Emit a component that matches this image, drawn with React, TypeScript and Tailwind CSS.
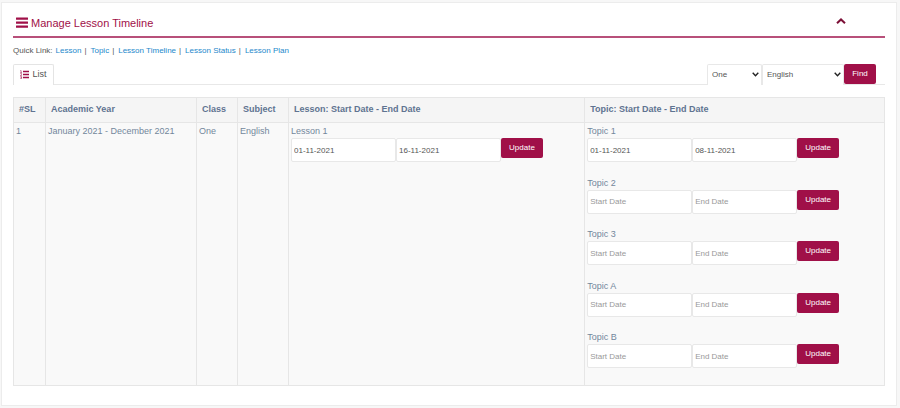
import { ReactNode } from "react";

type Entry = { name: string; start?: string; end?: string };

const quickLinks = ["Lesson", "Topic", "Lesson Timeline", "Lesson Status", "Lesson Plan"];

const lessons: Entry[] = [{ name: "Lesson 1", start: "01-11-2021", end: "16-11-2021" }];

const topics: Entry[] = [
  { name: "Topic 1", start: "01-11-2021", end: "08-11-2021" },
  { name: "Topic 2" },
  { name: "Topic 3" },
  { name: "Topic A" },
  { name: "Topic B" },
];

function BarsIcon() {
  return (
    <svg className="h-[12px] w-[12px]" viewBox="0 0 12 12" fill="currentColor" aria-hidden="true">
      <rect y="0.4" width="12" height="2.4" rx="0.4" />
      <rect y="4.4" width="12" height="2.4" rx="0.4" />
      <rect y="8.4" width="12" height="2.4" rx="0.4" />
    </svg>
  );
}

function ListIcon() {
  return (
    <svg className="h-[9px] w-[9px]" viewBox="0 0 9 9" fill="none" stroke="currentColor" aria-hidden="true">
      <path d="M3 1.5h6M3 4.5h6M3 7.5h6" strokeWidth="1.3" />
      <path d="M0.3 0.6h0.8v2M0.3 2.6h1.6M0.3 3.6h1.2v0.8L0.4 5.5h1.4M0.3 6.6h1.3v2H0.3M0.6 7.6h1" strokeWidth="0.6" />
    </svg>
  );
}

function SelectBox({ label, value, className }: { label: string; value: string; className: string }) {
  return (
    <div className={`relative ${className}`}>
      <select
        aria-label={label}
        defaultValue={value}
        className="h-[21px] w-full appearance-none rounded-t-xs border border-b-0 border-[#e8e8e8] bg-white pl-1 pr-3 text-[8px] text-[#555]"
      >
        <option>{value}</option>
      </select>
      <svg
        className="pointer-events-none absolute right-[3px] top-2 h-[5px] w-[7px]"
        viewBox="0 0 7 5"
        fill="none"
        stroke="#222"
        strokeWidth="1.4"
        aria-hidden="true"
      >
        <path d="M0.7 0.8L3.5 3.7L6.3 0.8" />
      </svg>
    </div>
  );
}

function ActionButton({ children, className }: { children: ReactNode; className: string }) {
  return (
    <button
      type="button"
      className={`shrink-0 rounded-xs bg-[#a01048] text-center text-[8px] leading-[20px] text-white ${className}`}
    >
      {children}
    </button>
  );
}

function DateInput({ label, hint, value }: { label: string; hint: string; value?: string }) {
  return (
    <input
      type="text"
      aria-label={label}
      placeholder={hint}
      defaultValue={value}
      className="h-[24px] w-[105px] min-w-0 rounded-xs border border-[#e8e8e8] bg-white px-[2px] text-[8px] text-[#555] placeholder:text-[#999]"
    />
  );
}

function EntryRow({ entry }: { entry: Entry }) {
  return (
    <li>
      <div className="mb-px leading-[12px]">{entry.name}</div>
      <div className="flex items-start">
        <DateInput label={`${entry.name} start date`} hint="Start Date" value={entry.start} />
        <DateInput label={`${entry.name} end date`} hint="End Date" value={entry.end} />
        <ActionButton className="w-[42px]">Update</ActionButton>
      </div>
    </li>
  );
}

const th = "border border-[#e6e6e6] px-[5px] text-left font-bold text-[#5f7391]";
const td = "border border-[#e6e6e6] px-[2px] pt-[2px] align-top";

export default function App() {
  return (
    <div className="min-h-screen bg-[#f7f7f7] pb-[2px] pl-px pr-[3px] pt-[2px] font-['Liberation_Sans',Arial,sans-serif] text-[9px] text-[#73879c]">
      <main className="border border-[#ececec] bg-white px-[11px] pb-[19px]">
        <header className="flex h-[35px] items-center justify-between border-b-2 border-[#b8507a] pl-[3px] pr-[39px] pt-[6px] text-[#a01048]">
          <h1 className="flex items-center gap-[3px] text-[11px] leading-[14px]">
            <BarsIcon />
            Manage Lesson Timeline
          </h1>
          <button type="button" aria-label="Collapse panel" className="-mt-1">
            <svg className="h-[6px] w-[10px]" viewBox="0 0 10 6" fill="none" stroke="#7c1037" strokeWidth="2" aria-hidden="true">
              <path d="M1 5.2L5 1.4L9 5.2" />
            </svg>
          </button>
        </header>

        <nav aria-label="Quick links" className="mt-[7px] flex h-[12px] items-center gap-[3px] text-[8px] leading-[12px] text-[#555]">
          <span>Quick Link:</span>
          {quickLinks.map((link, i) => (
            <span key={link} className="flex gap-[4px]">
              {i > 0 && <span>|</span>}
              <a href="#" className="text-[#2488cb]">
                {link}
              </a>
            </span>
          ))}
        </nav>

        <div className="mt-[7px] flex h-[21px] border-b border-[#e8e8e8]">
          <button
            type="button"
            className="flex h-[21px] w-[41px] items-center justify-center gap-[3px] rounded-t-xs border border-b-0 border-[#e4e4e4] bg-white pb-px text-[#555]"
          >
            <span className="text-[#a01048]">
              <ListIcon />
            </span>
            List
          </button>
          <form className="ml-auto mr-[9px] flex">
            <SelectBox label="Class" value="One" className="w-[55px]" />
            <SelectBox label="Subject" value="English" className="w-[82px]" />
            <ActionButton className="h-[20px] w-[32px]">Find</ActionButton>
          </form>
        </div>

        <table className="mt-[12px] w-full table-fixed border-collapse bg-[#f9f9f9]">
          <colgroup>
            <col className="w-[32px]" />
            <col className="w-[151px]" />
            <col className="w-[41px]" />
            <col className="w-[51px]" />
            <col className="w-[34%]" />
            <col />
          </colgroup>
          <thead>
            <tr className="h-[25px] bg-[#f5f5f5]">
              <th className={th}>#SL</th>
              <th className={th}>Academic Year</th>
              <th className={th}>Class</th>
              <th className={th}>Subject</th>
              <th className={th}>Lesson: Start Date - End Date</th>
              <th className={th}>Topic: Start Date - End Date</th>
            </tr>
          </thead>
          <tbody>
            <tr className="leading-[12px]">
              <td className={td}>1</td>
              <td className={td}>January 2021 - December 2021</td>
              <td className={td}>One</td>
              <td className={td}>English</td>
              <td className={td}>
                <ul>
                  {lessons.map((entry) => (
                    <EntryRow key={entry.name} entry={entry} />
                  ))}
                </ul>
              </td>
              <td className={`${td} pb-[17px]`}>
                <ul className="flex h-[243px] flex-col justify-between">
                  {topics.map((entry) => (
                    <EntryRow key={entry.name} entry={entry} />
                  ))}
                </ul>
              </td>
            </tr>
          </tbody>
        </table>
      </main>
    </div>
  );
}
